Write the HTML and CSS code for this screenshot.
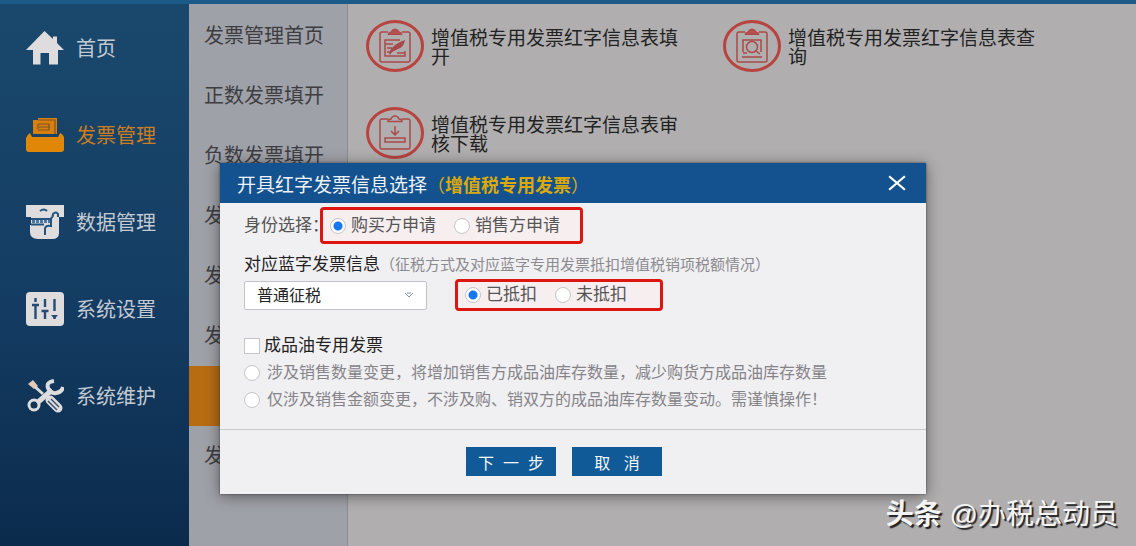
FILE: index.html
```html
<!DOCTYPE html>
<html lang="zh-CN">
<head>
<meta charset="utf-8">
<title>发票管理</title>
<link rel="stylesheet" href="styles.css">
</head>
<body>
<div class="app">
  <nav class="sidebar">
    <a class="nav-item" href="#">
      <svg class="nav-icon" viewBox="0 0 38 34"><path fill="#dedcdc" d="M18.500 0L27 8V5.500H31V12L38 19H32V33.500H23V22H14.500V33.500H7V19H0Z"/></svg>
      首页</a>
    <a class="nav-item nav-item-active" href="#">
      <svg class="nav-icon" viewBox="0 0 38 34"><path fill="#d8800d" d="M7 2H12V0H31V16H7Z"/><path fill="#173f66" d="M5 15L6 19H32L33 14L34 20H4Z"/><path fill="#e18707" d="M0 20Q1 17 4 15L6 19H32L34 15Q38 17 38 20V31Q38 34 35 34H3Q0 34 0 31Z"/><path fill="none" stroke="#7c5427" stroke-width="1.200" d="M12 2H29V16M12 6H23V12H12M13 9H24M12 6V11"/></svg>
      发票管理</a>
    <a class="nav-item" href="#">
      <svg class="nav-icon" viewBox="0 0 38 34"><path fill="#dedcdc" d="M0 0H38V12H33V28Q33 34 26 34H12Q4 34 4 27V20H5V12H0Z"/><path fill="none" stroke="#24537e" stroke-width="2" d="M14 6Q18 3 21 6M5 14H24Q27 13 27 9Q30 6 32 9V12"/><path fill="none" stroke="#4976a2" stroke-width="3" stroke-dasharray="3 1" d="M6 16.500H24"/><path fill="none" stroke="#24537e" stroke-width="2" d="M5 19.500H18M25 13V21Q19 20 19 24V30"/></svg>
      数据管理</a>
    <a class="nav-item" href="#">
      <svg class="nav-icon" viewBox="0 0 38 34"><rect width="38" height="34" rx="4" fill="#dedcdc"/><path fill="none" stroke="#244b73" stroke-width="2.400" d="M9.500 6V10M9.500 13V27M19 7V15M19 20V27M28.500 7V19M28.500 25V27M6 13H13M15.500 19H22.500"/><path fill="#244b73" d="M25 23H32L28.500 27Z"/></svg>
      系统设置</a>
    <a class="nav-item" href="#">
      <svg class="nav-icon" viewBox="0 0 38 34"><path stroke="#dedcdc" stroke-width="3" d="M7 6L17 15"/><path fill="#e3c9b8" d="M2 5L7 1L12 7L8 10Z"/><path fill="none" stroke="#dedcdc" stroke-width="5" d="M11 24L26 11"/><path fill="none" stroke="#dedcdc" stroke-width="4" d="M28 2Q20 3 22 9Q25 15 30 14Q36 13 37 8"/><circle cx="8" cy="26" r="5" fill="none" stroke="#dedcdc" stroke-width="3"/><path stroke="#dedcdc" stroke-width="9" stroke-linecap="round" d="M24 21L32 29"/><path stroke="#3b5675" stroke-width="1.500" d="M22 22L31 31M25 20L33 28"/></svg>
      系统维护</a>
  </nav>

  <nav class="submenu">
    <a class="sub-item" href="#">发票管理首页</a>
    <a class="sub-item" href="#">正数发票填开</a>
    <a class="sub-item" href="#">负数发票填开</a>
    <a class="sub-item" href="#">发</a>
    <a class="sub-item" href="#">发</a>
    <a class="sub-item" href="#">发</a>
    <a class="sub-item sub-item-active" href="#"></a>
    <a class="sub-item" href="#">发</a>
  </nav>

  <main class="tiles">
    <a class="tile" href="#">
      <svg class="tile-icon" viewBox="0 0 58 52"><ellipse class="ring" cx="29" cy="26" rx="27.500" ry="24.500"/><path class="board" d="M22 12H16Q14 12 14 14V40Q14 42 16 42H42Q44 42 44 40V14Q44 12 42 12H36"/><path class="clip" d="M22 14.500Q22 12 25 12Q26 9 29 9Q32 9 33 12Q36 12 36 14.500Z"/><path class="thin" d="M34 20H19V24H27M19 20V36H39V31M21 28H26M21 32H25M31 33H39"/><path fill="#a64a4c" d="M39 20Q38 27 32 29L26 32L24 35L23 33Q26 24 39 20Z"/></svg>
      <span class="tile-label">增值税专用发票红字信息表填开</span>
    </a>
    <a class="tile" href="#">
      <svg class="tile-icon" viewBox="0 0 58 52"><ellipse class="ring" cx="29" cy="26" rx="27.500" ry="24.500"/><path class="board" d="M22 12H16Q14 12 14 14V40Q14 42 16 42H42Q44 42 44 40V14Q44 12 42 12H36"/><path class="clip" d="M22 14.500Q22 12 25 12Q26 9 29 9Q32 9 33 12Q36 12 36 14.500Z"/><path class="thin" d="M20 32V20H38V32M20 33H24M19 37H39M33 31L37 34"/><circle class="thin" cx="29" cy="27" r="5.500"/></svg>
      <span class="tile-label">增值税专用发票红字信息表查询</span>
    </a>
    <a class="tile" href="#">
      <svg class="tile-icon" viewBox="0 0 58 52"><ellipse class="ring" cx="29" cy="26" rx="27.500" ry="24.500"/><path class="board" d="M22 12H16Q14 12 14 14V40Q14 42 16 42H42Q44 42 44 40V14Q44 12 42 12H36"/><path class="clip-open" d="M22 14.500Q22 12 25 12Q26 9 29 9Q32 9 33 12Q36 12 36 14.500Z"/><path class="thin" d="M29 19V28M25 24L29 28L33 24M19 31H39V35H19Z"/></svg>
      <span class="tile-label">增值税专用发票红字信息表审核下载</span>
    </a>
  </main>
</div>

<form class="dialog" role="dialog" aria-labelledby="dialog-title">
  <header class="dialog-head">
    <h1 class="dialog-title" id="dialog-title">开具红字发票信息选择<span class="dialog-kind">（<b>增值税专用发票</b>）</span></h1>
    <button class="close" type="button" aria-label="关闭"><svg class="close-icon" viewBox="0 0 16 14"><path d="M1 1L15 13M15 1L1 13"/></svg></button>
  </header>

  <div class="dialog-body">
    <div class="row">
      <span class="row-label" id="who">身份选择：</span>
      <div class="choices" role="radiogroup" aria-labelledby="who">
        <label class="choice"><input class="radio" type="radio" name="who" checked>购买方申请</label>
        <label class="choice"><input class="radio" type="radio" name="who">销售方申请</label>
      </div>
    </div>
    <h2 class="section" id="blue">对应蓝字发票信息<small class="note">（征税方式及对应蓝字专用发票抵扣增值税销项税额情况）</small></h2>
    <div class="row">
      <div class="select-box">
        <select class="select" aria-labelledby="blue"><option>普通征税</option></select>
        <svg class="arrow" viewBox="0 0 8 6"><path d="M0 1L4 5L8 1M2 1H6"/></svg>
      </div>
      <div class="choices choices-short" role="radiogroup" aria-labelledby="blue">
        <label class="choice"><input class="radio" type="radio" name="deduct" checked>已抵扣</label>
        <label class="choice"><input class="radio" type="radio" name="deduct">未抵扣</label>
      </div>
    </div>
    <div class="oil">
      <label class="oil-main"><input class="check" type="checkbox">成品油专用发票</label>
      <label class="oil-option"><input class="radio" type="radio" name="oil">涉及销售数量变更，将增加销售方成品油库存数量，减少购货方成品油库存数量</label>
      <label class="oil-option"><input class="radio" type="radio" name="oil">仅涉及销售金额变更，不涉及购、销双方的成品油库存数量变动。需谨慎操作！</label>
    </div>
  </div>

  <footer class="dialog-foot">
    <button class="btn" type="button">下&nbsp;&nbsp;一&nbsp;&nbsp;步</button>
    <button class="btn" type="button">取&nbsp;&nbsp;&nbsp;消</button>
  </footer>
</form>

<p class="watermark"><b>头条</b> @办税总动员</p>
</body>
</html>
```
FILE: styles.css
```css
* {
  box-sizing: border-box;
}

body {
  margin: 0;
  font-family: "Liberation Sans", "Noto Sans CJK SC", sans-serif;
  color: #222;
}

a {
  color: inherit;
  text-decoration: none;
}

.app {
  display: flex;
  min-height: 100vh;
  border-top: 4px solid #1c5a87;
  background: #b0aeaf;
}

.sidebar {
  flex: 0 0 189px;
  background: linear-gradient(#1a486d, #153e65 50%, #0b2b4c);
}

.nav-item {
  display: flex;
  align-items: center;
  gap: 12px;
  height: 87px;
  padding-left: 26px;
  font-size: 20px;
  color: #c3cad2;
}

.nav-item-active {
  color: #cb7d20;
}

.nav-icon {
  width: 38px;
  height: 34px;
}

.submenu {
  flex: 0 0 159px;
  padding-top: 2px;
  border-right: 1px solid #8b8d92;
  background: #9fa1a8;
}

.sub-item {
  display: flex;
  align-items: center;
  height: 60px;
  padding: 0 0 3px 15px;
  font-size: 20px;
  white-space: nowrap;
  color: #3d3d42;
}

.sub-item-active {
  background: #b86c12;
}

.tiles {
  flex: 1;
  display: grid;
  grid-template-columns: repeat(auto-fill, 357px);
  grid-auto-rows: 87px;
  align-content: start;
  padding: 16px 0 0 18px;
}

.tile {
  display: flex;
  align-items: flex-start;
  gap: 7px;
}

.tile-icon {
  flex: none;
  width: 58px;
  height: 52px;
}

.tile-label {
  width: 248px;
  padding-top: 9px;
  font-size: 19px;
  line-height: 19px;
}

.ring {
  fill: #b0aeaf;
  stroke: #b8433f;
  stroke-width: 3;
}

.board,
.clip-open,
.thin {
  fill: none;
  stroke: #ac4a4a;
  stroke-width: 1.5;
}

.clip {
  fill: #b8504d;
  stroke: #ac4a4a;
}

.dialog {
  position: absolute;
  left: 220px;
  top: 163px;
  width: 706px;
  background: #f0eff2;
  box-shadow: 0 0 2px #444, 0 2px 14px rgba(0, 0, 0, 0.45);
}

.dialog-head {
  display: flex;
  align-items: center;
  justify-content: space-between;
  height: 40px;
  padding: 0 20px 0 17px;
  background: #14528f;
  color: #eef3f8;
}

.dialog-title {
  margin: 0;
  font-size: 19px;
  font-weight: 400;
}

.dialog-kind {
  font-size: 18px;
  color: #dba90c;
}

.close {
  display: flex;
  padding: 0;
  border: 0;
  background: none;
}

.close-icon {
  width: 18px;
  height: 16px;
  fill: none;
  stroke: #fff;
  stroke-width: 2;
}

.dialog-body {
  padding: 4px 24px 16px;
}

.row {
  display: flex;
  align-items: center;
}

.row-label {
  flex: none;
  width: 76px;
  font-size: 17px;
  line-height: 20px;
  white-space: nowrap;
  color: #555;
}

.choices {
  display: flex;
  align-items: center;
  gap: 18px;
  width: 263px;
  height: 37px;
  padding-left: 7px;
  border: 3px solid #dd1710;
  border-radius: 4px;
  background: #f7eef0;
}

.choices-short {
  width: 208px;
  height: 32px;
  margin-left: 28px;
}

.choice {
  display: flex;
  align-items: center;
  gap: 5px;
  font-size: 17px;
  line-height: 20px;
  color: #555;
}

.radio,
.check {
  flex: none;
  appearance: none;
  width: 16px;
  height: 16px;
  margin: 0;
  border: 1px solid #c6c5c8;
  background: #fff;
}

.radio {
  border-radius: 50%;
}

.radio:checked {
  background: radial-gradient(circle, #1677f0 4px, #fff 5px);
}

.section {
  margin: 9px 0 2px;
  font-size: 17px;
  font-weight: 400;
  line-height: 24px;
  white-space: nowrap;
}

.note {
  font-size: 15px;
  color: #8b8a8e;
}

.select-box {
  display: grid;
  width: 183px;
  height: 29px;
}

.select {
  grid-area: 1 / 1;
  appearance: none;
  padding: 0 12px;
  border: 1px solid #c4c4c8;
  border-radius: 2px;
  background: #fff;
  font: inherit;
  font-size: 16px;
  color: #222;
}

.arrow {
  grid-area: 1 / 1;
  place-self: center end;
  width: 8px;
  height: 6px;
  margin-right: 14px;
  fill: none;
  stroke: #8a93a0;
  pointer-events: none;
}

.oil {
  display: grid;
  grid-template-rows: 26px 27px 27px;
  margin-top: 22px;
}

.oil-main,
.oil-option {
  display: flex;
  align-items: center;
  line-height: 20px;
}

.oil-main {
  gap: 4px;
  font-size: 17px;
}

.oil-option {
  gap: 7px;
  font-size: 16px;
  color: #858488;
}

.dialog-foot {
  display: flex;
  justify-content: center;
  gap: 16px;
  padding: 17px 18px 18px 0;
  border-top: 1px solid #c9c9cd;
}

.btn {
  width: 90px;
  height: 29px;
  padding: 0;
  border: 0;
  background: #115a98;
  font: inherit;
  font-size: 16px;
  color: #f4f7fa;
}

.watermark {
  position: absolute;
  right: 18px;
  bottom: 11px;
  margin: 0;
  font-size: 28px;
  line-height: 40px;
  color: #f4f4f4;
  text-shadow: 2px 2px 1px #222;
}
```
